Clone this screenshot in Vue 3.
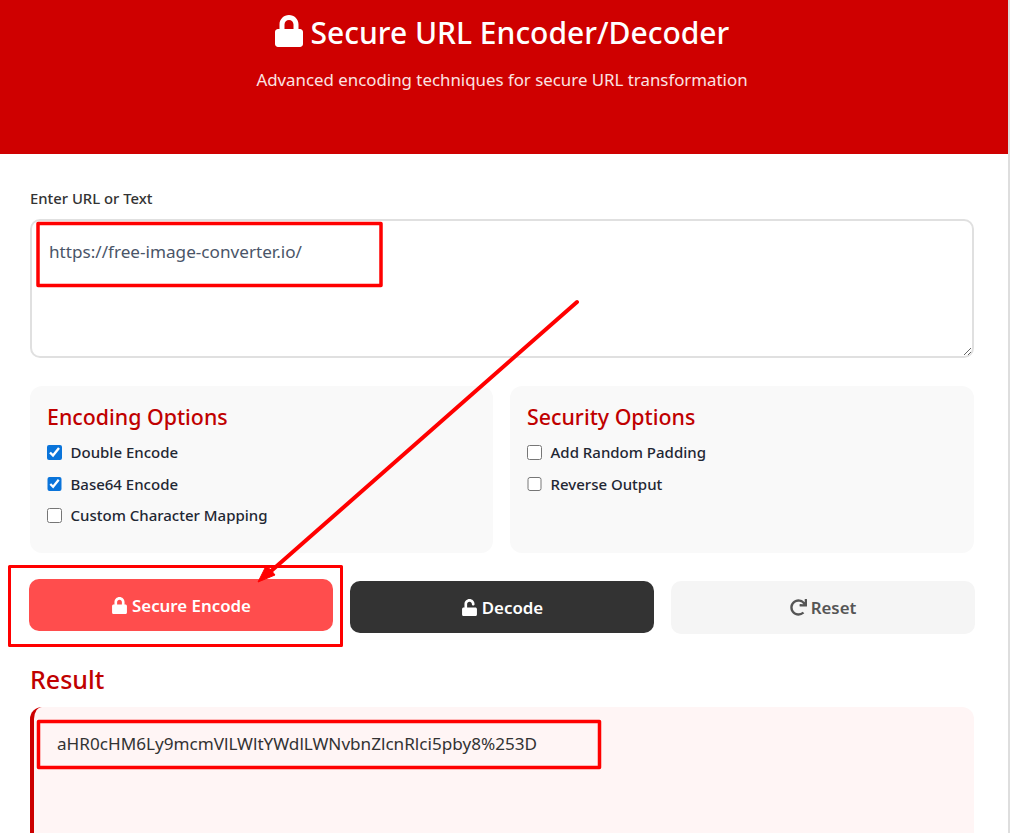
<script setup>
const lock = "M400 224h-24v-72C376 68.2 307.8 0 224 0S72 68.2 72 152v72H48c-26.5 0-48 21.5-48 48v192c0 26.5 21.5 48 48 48h352c26.5 0 48-21.5 48-48V272c0-26.5-21.5-48-48-48zm-104 0H152v-72c0-39.7 32.3-72 72-72s72 32.3 72 72v72z";
const unlock = "M400 256H152V152.9c0-39.6 31.7-72.5 71.3-72.9 40-.4 72.7 32.1 72.7 72v16c0 13.3 10.7 24 24 24h32c13.3 0 24-10.7 24-24v-16C376 68 307.5-.3 223.5 0 139.5.3 72 69.5 72 153.5V256H48c-26.5 0-48 21.5-48 48v160c0 26.5 21.5 48 48 48h352c26.5 0 48-21.5 48-48V304c0-26.5-21.5-48-48-48z";
const redo = "M500.33 0h-47.41a12 12 0 0 0-12 12.57l4 82.76A247.42 247.42 0 0 0 256 8C119.34 8 7.9 119.53 8 256.19 8.1 393.07 119.1 504 256 504a247.1 247.1 0 0 0 166.18-63.91 12 12 0 0 0 .48-17.43l-34-34a12 12 0 0 0-16.38-.55A176 176 0 1 1 402.1 157.8l-101.53-4.87a12 12 0 0 0-12.57 12v47.41a12 12 0 0 0 12 12h200.33a12 12 0 0 0 12-12V12a12 12 0 0 0-12-12z";
const groups = [
  { title: "Encoding Options", items: [
    { label: "Double Encode", on: true },
    { label: "Base64 Encode", on: true },
    { label: "Custom Character Mapping", on: false },
  ]},
  { title: "Security Options", items: [
    { label: "Add Random Padding", on: false },
    { label: "Reverse Output", on: false },
  ]},
];
</script>

<template>
  <div class="page">
    <header class="hero">
      <h1 class="title">
        <svg class="title-icon" viewBox="0 0 448 512"><path :d="lock" /></svg>
        Secure URL Encoder/Decoder
      </h1>
      <p class="subtitle">Advanced encoding techniques for secure URL transformation</p>
    </header>

    <main class="main">
      <label class="field-label" for="src">Enter URL or Text</label>
      <textarea id="src" class="input">https://free-image-converter.io/</textarea>

      <section class="options">
        <div v-for="g in groups" :key="g.title" class="group">
          <h3 class="group-title">{{ g.title }}</h3>
          <label v-for="i in g.items" :key="i.label" class="check">
            <input type="checkbox" :checked="i.on" />
            <span>{{ i.label }}</span>
          </label>
        </div>
      </section>

      <div class="actions">
        <button class="btn btn-primary">
          <svg class="btn-icon" viewBox="0 0 448 512"><path :d="lock" /></svg>Secure Encode
        </button>
        <button class="btn btn-dark">
          <svg class="btn-icon" viewBox="0 0 448 512"><path :d="unlock" /></svg>Decode
        </button>
        <button class="btn btn-light">
          <svg class="btn-icon" viewBox="0 0 512 512"><path :d="redo" /></svg>Reset
        </button>
      </div>

      <h2 class="result-title">Result</h2>
      <div class="result">aHR0cHM6Ly9mcmVlLWltYWdlLWNvbnZlcnRlci5pby8%253D</div>
    </main>

    <svg class="marks" viewBox="0 0 1010 833" width="1010" height="833">
      <g fill="none" stroke="#f00" stroke-linejoin="round">
        <rect x="38" y="223.5" width="343" height="62" stroke-width="3.5" />
        <rect x="9.5" y="566.5" width="332" height="79" stroke-width="3" />
        <rect x="38.5" y="721.5" width="561" height="46" stroke-width="3.5" />
      </g>
      <path d="M577 302 L270 572" stroke="#f00" stroke-width="4" stroke-linecap="round" fill="none" />
      <path d="M258 582 L266 566 L271 570 L275 575 Z" fill="#f00" stroke="#f00" stroke-width="1" />
    </svg>
  </div>
</template>

<style>
html, body { margin: 0; overflow: hidden; background: #fff; }
</style>

<style scoped>
.page {
  position: relative;
  box-sizing: border-box;
  width: 1010px;
  height: 833px;
  overflow: hidden;
  border-right: 2px solid #dedede;
  background: #fff;
  font-family: "Noto Sans", "Open Sans", sans-serif;
  color: #333;
}
.hero {
  box-sizing: border-box;
  height: 154px;
  padding: 11px 4px 0 0;
  background: #cf0000;
  color: #fff;
  text-align: center;
}
.title {
  margin: 0;
  font-size: 30px;
  line-height: 44px;
  font-weight: 500;
}
.title-icon {
  width: 28px;
  height: 32px;
  fill: #fff;
  vertical-align: -3px;
}
.subtitle {
  margin: 13px 0 0;
  font-size: 16.85px;
  line-height: 24px;
  color: #fbe3e3;
}
.main {
  padding: 34px 34px 0 30px;
}
.field-label {
  display: block;
  font-size: 14.85px;
  line-height: 20px;
  font-weight: 500;
  color: #333;
}
.input {
  display: block;
  box-sizing: border-box;
  width: 100%;
  height: 139px;
  margin-top: 11px;
  padding: 18px 17px;
  border: 2px solid #e0e0e0;
  border-radius: 10px;
  font: 400 17.15px/26px "Noto Sans", "Open Sans", sans-serif;
  color: #4a5568;
  outline: none;
}
.options {
  display: grid;
  grid-template-columns: 463px 464px;
  gap: 17px;
  margin-top: 28px;
}
.group {
  box-sizing: border-box;
  height: 167px;
  padding: 15px 17px;
  border-radius: 12px;
  background: #f9f9f9;
}
.group-title {
  margin: 0 0 3.5px;
  font-size: 21.35px;
  line-height: 32px;
  font-weight: 500;
  color: #c00000;
}
.check {
  display: flex;
  align-items: center;
  gap: 9px;
  height: 31.5px;
  font-size: 15px;
  font-weight: 500;
  color: #1f2733;
}
.check input {
  width: 14.5px;
  height: 14.5px;
  margin: 0;
  accent-color: #0a74da;
}
.actions {
  display: grid;
  grid-template-columns: repeat(3, 304px);
  gap: 17px;
  margin: 28px -1px 0;
}
.btn {
  display: flex;
  align-items: center;
  justify-content: center;
  gap: 4px;
  height: 52px;
  border: 0;
  border-radius: 10px;
  font: 600 16.85px "Noto Sans", "Open Sans", sans-serif;
}
.btn-icon {
  width: 17px;
  height: 17px;
  fill: currentColor;
}
.btn-primary {
  background: #ff4d4d;
  color: #fff;
  transform: translateY(-2px);
}
.btn-dark { background: #333; color: #fff; }
.btn-light { background: #f5f5f5; color: #555; height: 53px; }
.result-title {
  margin: 27px 0 0;
  font-size: 25px;
  line-height: 36px;
  font-weight: 500;
  color: #c00000;
}
.result {
  box-sizing: border-box;
  height: 200px;
  margin-top: 10px;
  padding: 24px 23px;
  border-left: 4px solid #cc0000;
  border-radius: 12px;
  background: #fff5f5;
  font-size: 17.14px;
  line-height: 26px;
  color: #333;
}
.marks {
  position: absolute;
  left: 0;
  top: 0;
  pointer-events: none;
}
</style>
